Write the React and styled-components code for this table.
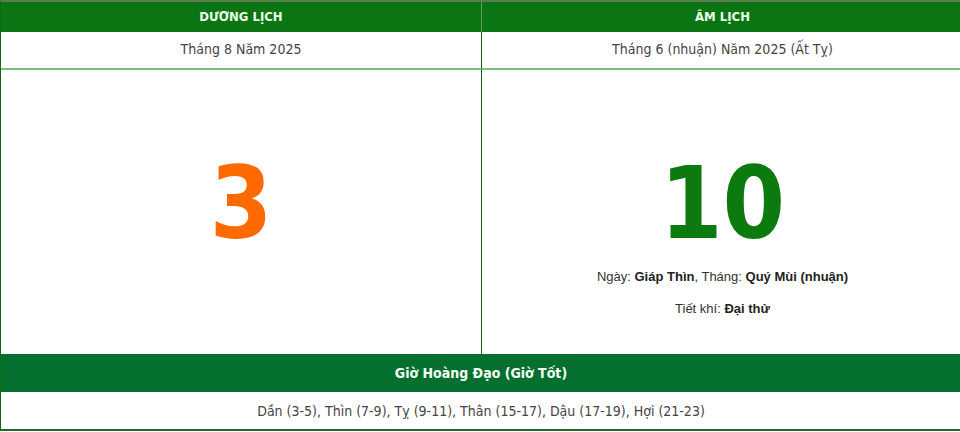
import React from 'react';
import styled, { createGlobalStyle } from 'styled-components';

const GlobalStyle = createGlobalStyle`
  html, body {
    margin: 0;
    padding: 0;
    background: #fff;
    overflow: hidden;
  }
  body {
    font-family: "DejaVu Sans Condensed", "DejaVu Sans", sans-serif;
    font-stretch: condensed;
  }
`;

const Table = styled.div`
  width: 962px;
  display: grid;
  grid-template-columns: 480px 1fr;
  border-top: 2px solid #5b7d52;
  border-left: 1px solid #0b6a17;
  border-bottom: 2px solid #1e6b2c;
`;

const HeadCell = styled.div`
  background: #0b7514;
  color: #ecffe8;
  font-weight: bold;
  font-size: 13px;
  height: 30px;
  padding-bottom: 2px;
  display: flex;
  align-items: center;
  justify-content: center;
  border-left: ${(p) => (p.$divider ? '1px solid #5f9e5c' : 'none')};
  box-sizing: border-box;
`;

const SubCell = styled.div`
  height: 38px;
  display: flex;
  align-items: center;
  justify-content: center;
  color: #444;
  font-size: 14px;
  padding-bottom: 2px;
  border-bottom: 2px solid #7cc17a;
  border-left: ${(p) => (p.$divider ? '1px solid #0b5e16' : 'none')};
  box-sizing: border-box;
`;

const DayCell = styled.div`
  height: 284px;
  display: flex;
  flex-direction: column;
  align-items: center;
  padding-top: 84px;
  box-sizing: border-box;
  border-left: ${(p) => (p.$divider ? '1px solid #0b5e16' : 'none')};
`;

const BigNumber = styled.div`
  font-family: "DejaVu Sans Condensed", "DejaVu Sans", sans-serif;
  font-stretch: condensed;
  font-weight: bold;
  font-size: 100px;
  line-height: 100px;
  color: ${(p) => p.$color};
`;

const Info = styled.div`
  font-family: "Liberation Sans", Arial, sans-serif;
  font-stretch: normal;
  font-size: 13px;
  color: #333;
  margin-top: ${(p) => p.$top}px;

  b {
    color: #222;
  }
`;

const FootHead = styled.div`
  grid-column: 1 / -1;
  background: #046f2f;
  color: #f4fff4;
  font-weight: bold;
  font-size: 14px;
  height: 38px;
  display: flex;
  align-items: center;
  justify-content: center;
  padding-right: 2px;
`;

const FootRow = styled.div`
  grid-column: 1 / -1;
  height: 37px;
  display: flex;
  align-items: center;
  justify-content: center;
  padding-right: 2px;
  color: #444;
  font-size: 14px;
`;

export default function App() {
  return (
    <>
      <GlobalStyle />
      <Table>
        <HeadCell>DƯƠNG LỊCH</HeadCell>
        <HeadCell $divider>ÂM LỊCH</HeadCell>
        <SubCell>Tháng 8 Năm 2025</SubCell>
        <SubCell $divider>Tháng 6 (nhuận) Năm 2025 (Ất Tỵ)</SubCell>
        <DayCell>
          <BigNumber $color="#ff6a00">3</BigNumber>
        </DayCell>
        <DayCell $divider>
          <BigNumber $color="#0d7a10">10</BigNumber>
          <Info $top={15}>
            Ngày: <b>Giáp Thìn</b>, Tháng: <b>Quý Mùi (nhuận)</b>
          </Info>
          <Info $top={17}>
            Tiết khí: <b>Đại thử</b>
          </Info>
        </DayCell>
        <FootHead>Giờ Hoàng Đạo (Giờ Tốt)</FootHead>
        <FootRow>Dần (3-5), Thìn (7-9), Tỵ (9-11), Thân (15-17), Dậu (17-19), Hợi (21-23)</FootRow>
      </Table>
    </>
  );
}
